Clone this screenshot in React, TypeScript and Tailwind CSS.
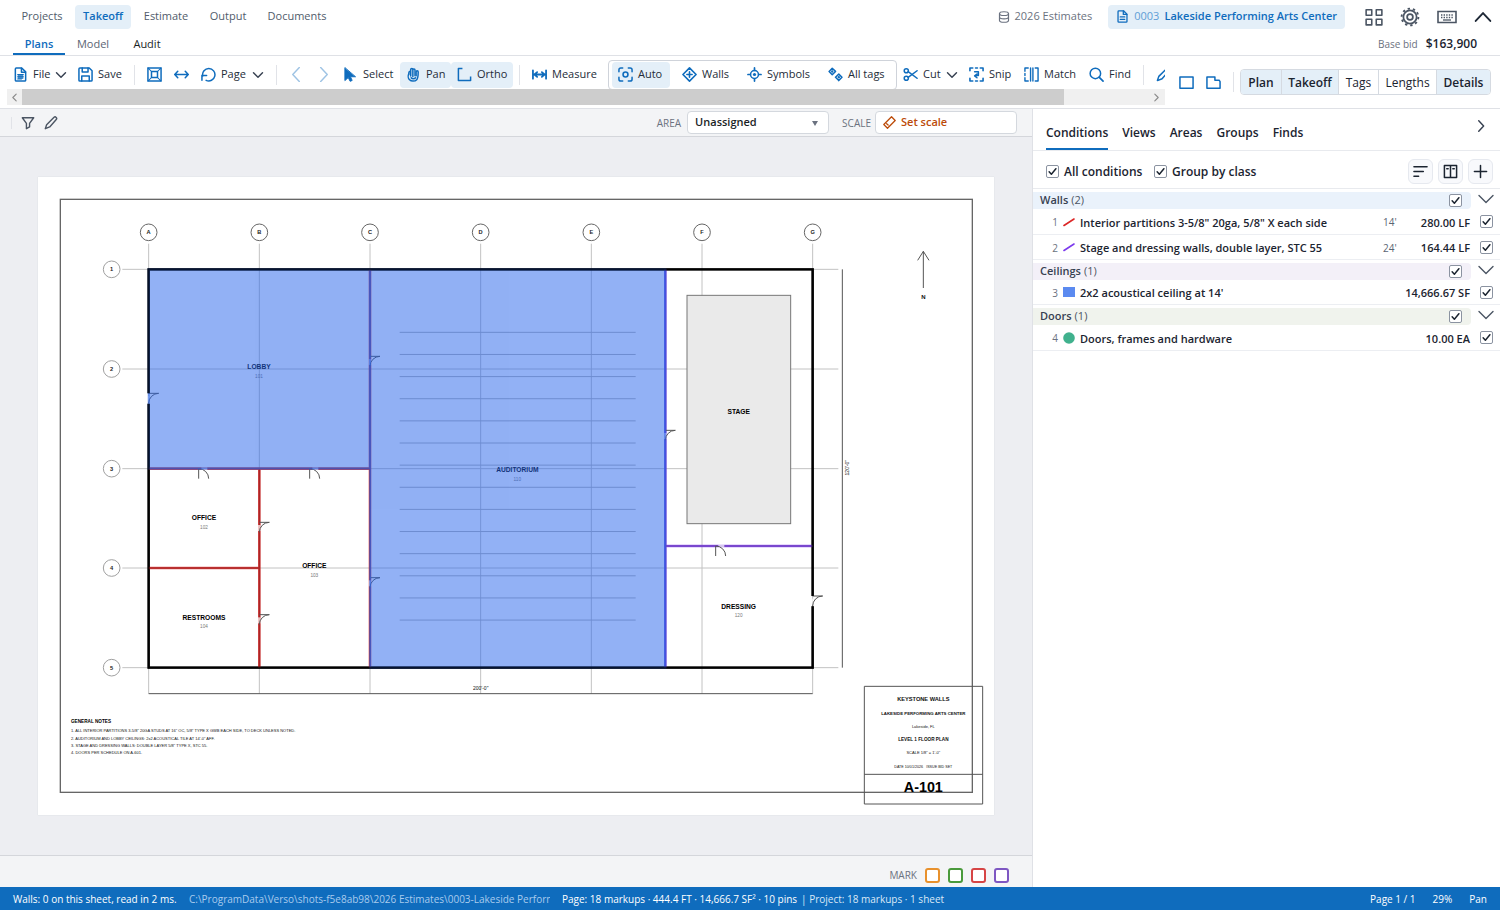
import type { ReactNode } from "react";
import clsx from "clsx";

/* ---------- icons ---------- */

function Icon({ children, size = "size-[15px]", className }: { children: ReactNode; size?: string; className?: string }) {
  return (
    <svg
      viewBox="0 0 16 16"
      fill="none"
      stroke="currentColor"
      strokeWidth="1.6"
      strokeLinecap="round"
      strokeLinejoin="round"
      aria-hidden="true"
      className={clsx("shrink-0", size, className)}
    >
      {children}
    </svg>
  );
}

const docPath = (
  <>
    <path d="M2.5 2a1 1 0 0 1 1-1h5.8l4.2 4.2V14a1 1 0 0 1-1 1h-9a1 1 0 0 1-1-1z" />
    <path d="M9 1.2v4.3h4.3" />
  </>
);

const icons = {
  file: (
    <>
      {docPath}
      <path d="M5 8h6v4.8H5z" fill="currentColor" stroke="none" opacity=".75" />
      <path d="M5 8h6M5 10.4h6M5 12.8h4" strokeWidth="1.1" />
    </>
  ),
  doc: (
    <>
      {docPath}
      <path d="M5.2 8.5h5.6M5.2 11.5h5.6" />
    </>
  ),
  save: (
    <>
      <path d="M1 2a1 1 0 0 1 1-1h10l3 3v10a1 1 0 0 1-1 1H2a1 1 0 0 1-1-1z" />
      <path d="M4.5 1v4.2h6.2V1M4 15V9.5h8V15" />
    </>
  ),
  fit: (
    <>
      <path d="M1 1h14v14H1zM4.8 4.8h6.4v6.4H4.8z" />
      <path d="m1 1 3.8 3.8M15 1l-3.8 3.8M1 15l3.8-3.8M15 15l-3.8-3.8" strokeWidth="1.1" />
    </>
  ),
  width: <path d="M1 8h14M4 4.5.8 8 4 11.5M12 4.5 15.2 8 12 11.5" />,
  rotate: (
    <>
      <path d="M1.8 9.5A6.6 6.6 0 1 1 5.5 14.2" />
      <path d="M1 14V9h5" />
    </>
  ),
  prev: <path d="M11 .5 4 8l7 7.5" strokeWidth="1.5" />,
  next: <path d="M5 .5 12 8l-7 7.5" strokeWidth="1.5" />,
  cursor: <path d="M2 1v13.5l3.6-3.2 2 4 2.2-1-1.9-3.9H13z" fill="currentColor" strokeWidth="1" />,
  hand: (
    <>
      <path d="M3 7.5c-1 1.5-.8 4.5.8 6.2 1.8 1.900 5.800 1.800 7.600-.2 1.400-1.600 1.600-4 1.600-8.300 0-1.600-2.200-1.600-2.200 0v4" />
      <path d="M5 9.5V2.7c0-1.600 2.300-1.600 2.300 0V10M7.300 3c.2-1.400 2.300-1.300 2.300.2v6M5 4.500C3.300 4.300 3 5.500 3 7.500M5.500 11.500c1 1.400 3.500 1.400 4.700 0" />
    </>
  ),
  ortho: <path d="M5 1.5H1.5v13h13V11" strokeLinecap="square" />,
  measure: <path d="M1 3.5v9M15 3.5v9M2.5 8h11M5.5 5.5 2.5 8l3 2.5M10.5 5.5l3 2.5-3 2.5" strokeWidth="1.9" />,
  auto: (
    <>
      <path d="M1 5V3a2 2 0 0 1 2-2h2M11 1h2a2 2 0 0 1 2 2v2M15 11v2a2 2 0 0 1-2 2h-2M5 15H3a2 2 0 0 1-2-2v-2" />
      <circle cx="8" cy="8" r="2.600" strokeWidth="1.700" />
    </>
  ),
  walls: <path d="M8 1 15 8l-7 7-7-7zM8 5.200v5.600M5.200 8h5.600" strokeWidth="1.700" />,
  symbols: (
    <>
      <circle cx="8" cy="8" r="4.200" />
      <circle cx="8" cy="8" r="1.700" fill="currentColor" stroke="none" />
      <path d="M8 1v2.500M8 12.500V15M1 8h2.500M12.500 8H15" strokeWidth="1.800" />
    </>
  ),
  tags: (
    <>
      <path d="M4.500 1.300 8 4.700 4.500 8.200 1.200 4.700zM11.500 7.600l3.400 3.400-3.400 3.500L8 11z" />
      <path d="M4.500 4.700h.01M11.500 11h.01" strokeWidth="2.600" />
    </>
  ),
  cut: (
    <>
      <circle cx="3.500" cy="4" r="2.200" />
      <circle cx="3.500" cy="12" r="2.200" />
      <path d="M5.500 5 15 12M5.500 11 15 4" />
    </>
  ),
  snip: (
    <>
      <path d="M1 4V1h3M7 1h2M12 1h3v3M15 12v3h-3M9 15H7M4 15H1v-3" strokeWidth="1.700" />
      <path d="M6 5h4v4H7.500M8.500 7.500 6 9.500l2.500 2" />
    </>
  ),
  match: <path d="M4.500 1H1v3.500M1 7v2M1 11.500V15h3.500M7 1v14M9.500 1v14M12 1h3v14h-3" strokeWidth="1.500" />,
  find: (
    <>
      <circle cx="6.800" cy="6.800" r="5.600" />
      <path d="m11 11 4 4" strokeWidth="1.800" />
    </>
  ),
  pen: <path d="M1.500 14.500 3 10l8.500-8.500c1.500-1.500 4 1 2.500 2.500L6.500 12.500z" />,
  rect: <path d="M1 2h14v12H1z" strokeWidth="1.600" />,
  shape: <path d="M1 2h8.500v3.500H14L15 7v7H1z" strokeWidth="1.600" />,
  chevron: <path d="m2 5 6 6 6-6" strokeWidth="1.900" />,
  filter: <path d="M1.500 2h13L9.800 8.500v4l-3.600 2v-6z" />,
  ruler: <path d="M10.500 1 15 5.500 5.500 15 1 10.500zM4.500 9.500l1.800 1.600" />,
};

function ChevronIcon({ className }: { className?: string }) {
  return (
    <Icon size="size-3" className={clsx("text-[#374151]", className)}>
      {icons.chevron}
    </Icon>
  );
}

/* ---------- header ---------- */

function Header() {
  const links = ["Projects", "Takeoff", "Estimate", "Output", "Documents"];
  const widths = ["w-[66px]", "w-14", "w-[70px]", "w-[54px]", "w-[84px]"];
  return (
    <header className="border-b border-[#dfe1e6]">
      <div className="flex h-[33px] items-center pr-2 pl-[9px]">
        <nav className="flex text-[11px] text-[#515c6b]">
          {links.map((link, i) => (
            <a
              key={link}
              href="#"
              className={clsx(
                "flex h-6 items-center justify-center rounded",
                widths[i],
                link === "Takeoff" && "bg-[#e4eff8] font-semibold text-[#0f6cbd]",
              )}
            >
              {link}
            </a>
          ))}
        </nav>
        <div className="ml-auto flex items-center">
          <a href="#" className="flex items-center gap-[5px] text-[11px] text-[#6b7280]">
            <Icon size="size-3">
              <ellipse cx="8" cy="3.5" rx="6" ry="2.5" />
              <path d="M2 3.5v9c0 3.3 12 3.3 12 0v-9M2 8c0 3.3 12 3.3 12 0" />
            </Icon>
            2026 Estimates
          </a>
          <a href="#" className="ml-4 flex h-6 items-center rounded bg-[#e4eff8] px-2 text-[11px] text-[#0f6cbd]">
            <Icon size="size-[13px]">{icons.doc}</Icon>
            <span className="ml-[5px] text-[#5f9ed6]">0003</span>
            <span className="ml-[5px] font-semibold">Lakeside Performing Arts Center</span>
          </a>
          <button type="button" aria-label="Apps" className="ml-5 text-[#4b5563]">
            <Icon size="size-[18px]">
              <path d="M1 1.500h5v5H1zM10 1.500h5v5h-5zM1 10h5v5H1zM10 10h5v5h-5z" strokeWidth="1.400" />
            </Icon>
          </button>
          <button type="button" aria-label="Settings" className="ml-[17px] text-[#4b5563]">
            <Icon size="size-5">
              <circle cx="8" cy="8" r="5.300" strokeWidth="1.400" />
              <circle cx="8" cy="8" r="2.300" strokeWidth="1.400" />
              <circle cx="8" cy="8" r="6.700" strokeWidth="1.500" strokeLinecap="butt" strokeDasharray="1.900 2.310" />
            </Icon>
          </button>
          <button type="button" aria-label="Keyboard" className="ml-[17px] text-[#4b5563]">
            <svg viewBox="0 0 20 14" fill="none" stroke="currentColor" className="h-[14px] w-5" aria-hidden="true">
              <path d="M1 1.500h18v11H1z" strokeWidth="1.600" />
              <path d="M4 5h12M4 7.500h12" strokeWidth="1.300" strokeDasharray="1.400 1.200" />
              <path d="M6 10h8" strokeWidth="1.300" />
            </svg>
          </button>
          <button type="button" aria-label="Collapse header" className="ml-[17px] text-[#1f2937]">
            <Icon size="size-[18px]">
              <path d="m1.500 11.500 6.500-7 6.500 7" strokeWidth="1.700" />
            </Icon>
          </button>
        </div>
      </div>
      <div className="flex h-[22px] items-stretch pr-[23px] pl-[13px]">
        <nav className="flex text-[11px]">
          <a href="#" className="flex w-[52px] items-center justify-center border-b-2 border-[#0f6cbd] pt-[3px] font-semibold text-[#0f6cbd]">
            Plans
          </a>
          <a href="#" className="flex w-14 items-center justify-center border-b-2 border-transparent pt-[3px] text-[#5b6573]">
            Model
          </a>
          <a href="#" className="flex w-[52px] items-center justify-center border-b-2 border-transparent pt-[3px] text-[#1b1f26]">
            Audit
          </a>
        </nav>
        <p className="ml-auto flex items-center gap-2 text-[10px] text-[#6b7280]">
          Base bid <strong className="text-xs font-semibold text-[#1b2430]">$163,900</strong>
        </p>
      </div>
    </header>
  );
}

/* ---------- toolbar ---------- */

function Tool({
  icon,
  label,
  width,
  text,
  active,
  menu,
  className,
}: {
  icon: ReactNode;
  label: string;
  width: string;
  text?: boolean;
  active?: boolean;
  menu?: boolean;
  className?: string;
}) {
  return (
    <button
      type="button"
      aria-label={label}
      aria-pressed={active}
      className={clsx(
        "flex h-[26px] shrink-0 items-center gap-[5px] rounded-sm px-[6px] text-[11px] whitespace-nowrap",
        width,
        active && "bg-[#e4eff8]",
        className,
      )}
    >
      <Icon className="text-[#0f6cbd]">{icon}</Icon>
      {text && <span>{label}</span>}
      {menu && <ChevronIcon className="ml-auto" />}
    </button>
  );
}

function Divider() {
  return <span className="mx-[6px] h-5 w-px shrink-0 bg-[#e1e3e8]" />;
}

function Toolbar() {
  const layers = [
    { label: "Plan", width: "w-10", on: true },
    { label: "Takeoff", width: "w-[57px]", on: true },
    { label: "Tags", width: "w-10", on: false },
    { label: "Lengths", width: "w-[58px]", on: false },
    { label: "Details", width: "w-[54px]", on: true },
  ];
  return (
    <div className="flex h-[53px] border-b border-[#dfe1e6] pr-[9px] pl-[7px]">
      <div className="flex min-w-0 flex-1 flex-col">
        <div className="flex h-[33px] items-center overflow-hidden pt-1 text-[#242c38]">
          <Tool icon={icons.file} label="File" width="w-[65px]" text menu />
          <Tool icon={icons.save} label="Save" width="w-14" text />
          <Divider />
          <Tool icon={icons.fit} label="Fit page" width="w-[27px]" />
          <Tool icon={icons.width} label="Fit width" width="w-[27px]" />
          <Tool icon={icons.rotate} label="Page" width="w-[75px]" text menu />
          <Divider />
          <Tool icon={icons.prev} label="Previous page" width="w-[27px]" className="opacity-40" />
          <Tool icon={icons.next} label="Next page" width="w-[27px]" className="opacity-40" />
          <Tool icon={icons.cursor} label="Select" width="w-[63px]" text />
          <Tool icon={icons.hand} label="Pan" width="w-[51px]" text active />
          <Tool icon={icons.ortho} label="Ortho" width="w-[62px]" text active />
          <Divider />
          <Tool icon={icons.measure} label="Measure" width="w-[76px]" text />
          <div className="ml-[6px] flex h-[30px] shrink-0 items-center gap-[6px] rounded-sm border border-[#cfd3da] px-[3px]">
            <Tool icon={icons.auto} label="Auto" width="w-[58px]" text active />
            <Tool icon={icons.walls} label="Walls" width="w-[59px]" text />
            <Tool icon={icons.symbols} label="Symbols" width="w-[75px]" text />
            <Tool icon={icons.tags} label="All tags" width="w-[71px]" text />
          </div>
          <Tool icon={icons.cut} label="Cut" width="w-[66px]" text menu />
          <Tool icon={icons.snip} label="Snip" width="w-[55px]" text />
          <Tool icon={icons.match} label="Match" width="w-[65px]" text />
          <Tool icon={icons.find} label="Find" width="w-[54px]" text />
          <Divider />
          <Tool icon={icons.pen} label="Pen" width="w-[27px]" />
        </div>
        <div className="flex h-4 items-center bg-[#f0f0f0] text-[#8a8a8a]">
          <Icon size="size-[9px]" className="mx-[3px]">
            <path d="M11 2 5 8l6 6" strokeWidth="2" />
          </Icon>
          <div className="h-full w-[90%] bg-[#cdcdcd]" />
          <Icon size="size-[9px]" className="mr-1 ml-auto">
            <path d="m5 2 6 6-6 6" strokeWidth="2" />
          </Icon>
        </div>
      </div>
      <div className="flex shrink-0 items-center pl-2">
        <Tool icon={icons.rect} label="Rectangle" width="w-[27px]" />
        <Tool icon={icons.shape} label="Polygon" width="w-[27px]" />
        <Divider />
        <div className="flex h-[26px] overflow-hidden rounded-sm border border-[#d5dae1] text-xs text-[#1b2430]">
          {layers.map((layer, i) => (
            <button
              key={layer.label}
              type="button"
              aria-pressed={layer.on}
              className={clsx(
                "flex items-center justify-center pt-[2px]",
                layer.width,
                layer.on && "bg-[#e4eff8] font-semibold",
                i > 0 && "border-l border-[#d5dae1]",
              )}
            >
              {layer.label}
            </button>
          ))}
        </div>
      </div>
    </div>
  );
}

/* ---------- plan sheet ---------- */

const COLS = [332, 664, 996, 1328, 1660, 1992, 2324];
const ROWS = [277, 576, 875, 1173, 1472];
const SEATS = Array.from({ length: 14 }, (_, i) => 466 + i * 66.4);

const ROOMS = [
  { name: "LOBBY", no: "101", x: 663, y: 570 },
  { name: "OFFICE", no: "102", x: 498, y: 1023 },
  { name: "OFFICE", no: "103", x: 829, y: 1167 },
  { name: "RESTROOMS", no: "104", x: 498, y: 1322 },
  { name: "AUDITORIUM", no: "110", x: 1438, y: 879 },
  { name: "STAGE", no: "", x: 2102, y: 704 },
  { name: "DRESSING", no: "120", x: 2102, y: 1288 },
];

const EXTERIOR = "M332 649V277H2324V1257M2324 1288V1472H332V680";
const PARTITIONS = "M332 875H996M996 277V1472M664 875V1472M332 1173H664";
const STAGE_WALLS = "M1882 277V1472M1882 1107H2324";

// doors in vertical walls swing right, doors in horizontal walls swing down
const V_DOORS = [
  [332, 649],
  [996, 538],
  [664, 1036],
  [664, 1313],
  [996, 1202],
  [1882, 760],
  [2324, 1257],
];
const H_DOORS = [
  [482, 875],
  [815, 875],
  [2033, 1107],
];

const NOTES = [
  "1. ALL INTERIOR PARTITIONS 3-5/8\" 20GA STUDS AT 16\" OC, 5/8\" TYPE X GWB EACH SIDE, TO DECK UNLESS NOTED.",
  "2. AUDITORIUM AND LOBBY CEILINGS: 2x2 ACOUSTICAL TILE AT 14'-0\" AFF.",
  "3. STAGE AND DRESSING WALLS: DOUBLE LAYER 5/8\" TYPE X, STC 55.",
  "4. DOORS PER SCHEDULE ON A-601.",
];

function Sheet() {
  return (
    <svg
      viewBox="0 0 2868 1914"
      role="img"
      aria-label="A-101 Level 1 floor plan"
      className="w-full bg-white font-['Liberation_Sans',Arial,sans-serif] shadow-[0_0_1px_#c9ccd3]"
    >
      <rect x="67" y="67" width="2736" height="1779" fill="none" stroke="#666" strokeWidth="4" />

      {/* grid */}
      <g stroke="#c2c2c2" strokeWidth="3">
        {COLS.map((x) => (
          <path key={x} d={`M${x} 200V1550`} />
        ))}
        {ROWS.map((y) => (
          <path key={y} d={`M253 ${y}H2401`} />
        ))}
      </g>
      <g fill="#fff" strokeWidth="3">
        {COLS.map((x) => (
          <circle key={x} cx={x} cy="166" r="25" stroke="#666" />
        ))}
        {ROWS.map((y) => (
          <circle key={y} cx="221" cy={y} r="25" stroke="#a0a0a0" />
        ))}
      </g>
      <g fill="#222" fontSize="17" fontWeight="700" textAnchor="middle">
        {COLS.map((x, i) => (
          <text key={x} x={x} y="172">
            {"ABCDEFG"[i]}
          </text>
        ))}
        {ROWS.map((y, i) => (
          <text key={y} x="221" y={y + 6}>
            {i + 1}
          </text>
        ))}
      </g>

      <rect x="1947" y="355" width="311" height="685" fill="#eaeaea" stroke="#777" strokeWidth="3" />
      <g stroke="#b4b4b4" strokeWidth="3">
        {SEATS.map((y) => (
          <path key={y} d={`M1085 ${y}H1793`} />
        ))}
      </g>

      {/* walls */}
      <path d={EXTERIOR} fill="none" stroke="#000" strokeWidth="7" />
      <path d={PARTITIONS} fill="none" stroke="#222" strokeWidth="5" />
      <path d={STAGE_WALLS} fill="none" stroke="#444" strokeWidth="5" />

      {/* wall markups */}
      <g fill="none" strokeWidth="8" opacity=".75">
        <path d={PARTITIONS} stroke="#dc2626" />
        <path d={STAGE_WALLS} stroke="#7c3aed" />
      </g>

      {/* doors */}
      <g stroke="#fff" strokeWidth="8" opacity=".7">
        {V_DOORS.map(([x, y]) => (
          <path key={`${x}-${y}`} d={`M${x} ${y + 8}v18`} />
        ))}
        {H_DOORS.map(([x, y]) => (
          <path key={`${x}-${y}`} d={`M${x + 8} ${y}h18`} />
        ))}
      </g>
      <g stroke="#555" strokeWidth="3" fill="none">
        {V_DOORS.map(([x, y]) => (
          <path key={`${x}-${y}`} d={`M${x} ${y}h30a30 30 0 0 0-30 30`} />
        ))}
        {H_DOORS.map(([x, y]) => (
          <path key={`${x}-${y}`} d={`M${x} ${y + 30}v-30a30 30 0 0 1 30 30`} />
        ))}
      </g>

      {/* rooms */}
      <g textAnchor="middle">
        {ROOMS.map((room) => (
          <g key={`${room.name}${room.no}`}>
            <text x={room.x} y={room.y + 7} fontSize="20" fontWeight="700" fill="#000">
              {room.name}
            </text>
            <text x={room.x} y={room.y + 32} fontSize="14" fill="#777">
              {room.no}
            </text>
          </g>
        ))}
      </g>

      {/* dimensions and north arrow */}
      <g stroke="#555" strokeWidth="3" fill="none">
        <path d="M332 1550H2324M2413 277V1472" />
        <path d="M2656 333V223M2639 250l17-27 17 27" />
      </g>
      <g fill="#111" fontSize="15" textAnchor="middle">
        <text x="1328" y="1539">200'-0"</text>
        <text transform="translate(2434 872) rotate(-90)">120'-0"</text>
        <text x="2656" y="366" fontSize="18" fontWeight="700">
          N
        </text>
      </g>

      {/* notes */}
      <text x="99" y="1639" fontSize="14" fontWeight="700" fill="#000">
        GENERAL NOTES
      </text>
      <g fontSize="12" fill="#111">
        {NOTES.map((note, i) => (
          <text key={note} x="99" y={1666 + i * 22}>
            {note}
          </text>
        ))}
      </g>

      {/* title block */}
      <g fill="none" stroke="#555" strokeWidth="3">
        <path d="M2479 1528h355v353h-355zM2479 1792h355" />
      </g>
      <g textAnchor="middle" fill="#111">
        <text x="2656" y="1573" fontSize="17" fontWeight="700">KEYSTONE WALLS</text>
        <text x="2656" y="1613" fontSize="13" fontWeight="700">LAKESIDE PERFORMING ARTS CENTER</text>
        <text x="2656" y="1652" fontSize="12">Lakeside, FL</text>
        <text x="2656" y="1692" fontSize="14" fontWeight="700">LEVEL 1 FLOOR PLAN</text>
        <text x="2656" y="1732" fontSize="12">SCALE 1/8" = 1'-0"</text>
        <text x="2656" y="1772" fontSize="11">DATE 10/01/2026 {"\u00a0"} ISSUE BID SET</text>
        <text x="2656" y="1845" fontSize="43" fontWeight="700" fill="#000">A-101</text>
      </g>

      {/* ceiling markups */}
      <g fill="#2563eb" opacity=".5">
        <path d="M332 277H996V875H332z" />
        <path d="M996 277H1882V1472H996z" />
      </g>
      <path d="M332 277H1882V1472H996V875H332zM996 277V875" fill="none" stroke="#2563eb" strokeWidth="6" opacity=".5" />
      <path d={EXTERIOR} fill="none" stroke="#000" strokeWidth="7" opacity=".7" />
    </svg>
  );
}

function PlanPane() {
  const marks = [
    { name: "Orange", color: "border-[#e8912d]" },
    { name: "Green", color: "border-[#4a9a3c]" },
    { name: "Red", color: "border-[#d64545]" },
    { name: "Purple", color: "border-[#7e57c2]" },
  ];
  return (
    <main className="flex min-w-0 flex-1 flex-col border-r border-[#dfe1e6] bg-[#edeef2]">
      <div className="flex h-7 items-center border-b border-[#d4d6db] bg-[#f3f4f6] pr-[15px] pl-[11px] text-[#4b5563]">
        <span className="h-3 w-px bg-[#e1e3e8]" />
        <button type="button" aria-label="Filter" className="ml-[9px]">
          <Icon size="size-[14px]">{icons.filter}</Icon>
        </button>
        <button type="button" aria-label="Edit" className="ml-[9px]">
          <Icon size="size-[14px]">{icons.pen}</Icon>
        </button>
        <label htmlFor="area" className="ml-auto pt-[2px] text-[10px] text-[#6b7280]">
          AREA
        </label>
        <div className="relative ml-[6px]">
          <select
            id="area"
            className="block h-[23px] w-[142px] appearance-none rounded-sm border border-[#d4d8de] bg-white pl-[7px] text-[11px] font-semibold text-[#1b1f26]"
          >
            <option>Unassigned</option>
          </select>
          <svg viewBox="0 0 6 5" className="pointer-events-none absolute top-[10px] right-[11px] h-[5px] w-[6px] fill-[#6b7280]" aria-hidden="true">
            <path d="M0 0h6L3 5z" />
          </svg>
        </div>
        <label htmlFor="scale" className="ml-[13px] pt-[2px] text-[10px] text-[#6b7280]">
          SCALE
        </label>
        <button
          id="scale"
          type="button"
          className="ml-1 flex h-[23px] w-[142px] items-center gap-[5px] rounded-sm border border-[#d4d8de] bg-white pl-[7px] text-[11px] font-semibold text-[#bc4b09]"
        >
          <Icon size="size-[13px]">{icons.ruler}</Icon>
          Set scale
        </button>
      </div>
      <div className="flex flex-1 items-center px-[38px]">
        <Sheet />
      </div>
      <div className="flex h-8 items-center gap-2 border-t border-[#d4d6db] bg-[#f3f4f6] pt-2 pr-[23px]">
        <span className="ml-auto text-[10px] text-[#6b7280]">MARK</span>
        {marks.map((mark) => (
          <button
            key={mark.name}
            type="button"
            aria-label={mark.name}
            className={clsx("size-[15px] rounded-[3px] border-2 bg-white", mark.color)}
          />
        ))}
      </div>
    </main>
  );
}

/* ---------- conditions panel ---------- */

function Check({ id, label }: { id: string; label?: string }) {
  return (
    <span className="inline-grid size-[13px] place-items-center align-middle">
      <input
        id={id}
        type="checkbox"
        defaultChecked
        aria-label={label}
        className="peer col-start-1 row-start-1 size-[13px] appearance-none rounded-xs border border-[#8b93a1] bg-white"
      />
      <Icon size="size-[9px]" className="pointer-events-none invisible col-start-1 row-start-1 text-[#1b2430] peer-checked:visible">
        <path d="m2 8.500 4 4.500 8-10" strokeWidth="2.600" />
      </Icon>
    </span>
  );
}

const GROUPS = [
  {
    name: "Walls",
    tint: "bg-[#eaf2fb]",
    items: [
      { no: 1, kind: "line", color: "#dc2626", name: "Interior partitions 3-5/8\" 20ga, 5/8\" X each side", height: "14'", qty: "280.00 LF" },
      { no: 2, kind: "line", color: "#7c3aed", name: "Stage and dressing walls, double layer, STC 55", height: "24'", qty: "164.44 LF" },
    ],
  },
  {
    name: "Ceilings",
    tint: "bg-[#f3f0f8]",
    items: [{ no: 3, kind: "area", color: "#5b8af0", name: "2x2 acoustical ceiling at 14'", height: "", qty: "14,666.67 SF" }],
  },
  {
    name: "Doors",
    tint: "bg-[#f0f3ed]",
    items: [{ no: 4, kind: "pin", color: "#40b18d", name: "Doors, frames and hardware", height: "", qty: "10.00 EA" }],
  },
];

function Swatch({ kind, color }: { kind: string; color: string }) {
  return (
    <svg viewBox="0 0 12 12" className="size-3" aria-hidden="true">
      {kind === "line" && <path d="M1 9.500 11 3" stroke={color} strokeWidth="1.600" strokeLinecap="round" />}
      {kind === "area" && <path d="M0 1h12v10H0z" fill={color} />}
      {kind === "pin" && <circle cx="6" cy="6" r="5.800" fill={color} />}
    </svg>
  );
}

function ConditionsPanel() {
  const boxed = "grid size-[25px] place-items-center rounded-md border border-[#e6e9ef] bg-[#f8f9fc] text-[#1b2430]";
  return (
    <aside className="w-[467px] shrink-0 bg-white">
      <div className="flex h-[42px] items-end border-b border-[#e8eaee] pr-[13px] pl-[13px]">
        <nav className="flex gap-[14px] text-xs font-semibold text-[#1b2430]">
          {["Conditions", "Views", "Areas", "Groups", "Finds"].map((tab, i) => (
            <a
              key={tab}
              href="#"
              className={clsx("flex h-[25px] items-start border-b-2", i === 0 ? "border-[#0f6cbd]" : "border-transparent")}
            >
              {tab}
            </a>
          ))}
        </nav>
        <button type="button" aria-label="Collapse panel" className="mb-[18px] ml-auto text-[#374151]">
          <Icon size="size-3">
            <path d="m5 1 6.500 7L5 15" strokeWidth="1.900" />
          </Icon>
        </button>
      </div>

      <div className="flex h-[38px] items-center border-b border-[#e8eaee] pt-1 pr-[7px] pl-[13px] text-xs font-semibold text-[#1b2430]">
        <Check id="all" />
        <label htmlFor="all" className="ml-[5px] w-[90px] pt-px whitespace-nowrap">
          All conditions
        </label>
        <Check id="by-class" />
        <label htmlFor="by-class" className="ml-[5px] pt-px whitespace-nowrap">
          Group by class
        </label>
        <div className="ml-auto flex gap-[5px]">
          <button type="button" aria-label="Sort" className={boxed}>
            <Icon>
              <path d="M1 3h14M1 8h10M1 13h5" />
            </Icon>
          </button>
          <button type="button" aria-label="Columns" className={boxed}>
            <Icon>
              <path d="M1.500 1.500h13v13h-13zM8 1.500v13M4 5h1.500M10.500 5H12" />
            </Icon>
          </button>
          <button type="button" aria-label="Add condition" className={boxed}>
            <Icon>
              <path d="M8 1.500v13M1.500 8h13" />
            </Icon>
          </button>
        </div>
      </div>

      <table className="w-full table-fixed border-collapse text-left text-[11px]">
        <colgroup>
          <col className="w-[25px]" />
          <col className="w-[22px]" />
          <col />
          <col className="w-[22px]" />
          <col className="w-[66px]" />
          <col className="w-[29px]" />
        </colgroup>
        {GROUPS.map((group) => (
          <tbody key={group.name}>
            <tr className="h-5">
              <th colSpan={5} scope="rowgroup" className="p-0 pt-[3px] font-normal">
                <div className={clsx("flex h-[17px] items-center rounded-r-sm pr-[9px] pl-[7px] text-[#4b5563]", group.tint)}>
                  <span className="mr-[3px] font-semibold text-[#374151]">{group.name}</span>({group.items.length})
                  <span className="ml-auto flex">
                    <Check id={group.name} label={`Show ${group.name}`} />
                  </span>
                </div>
              </th>
              <td className="p-0 text-center">
                <button type="button" aria-label={`Collapse ${group.name}`} className="block pl-[7px] text-[#4b5563]">
                  <Icon size="size-4">
                    <path d="m1 4.500 7 7 7-7" strokeWidth="1.400" />
                  </Icon>
                </button>
              </td>
            </tr>
            {group.items.map((item) => (
              <tr key={item.no} className="h-[25px] border-b border-[#eceef2] whitespace-nowrap text-[#1b2430]">
                <td className="p-0 pt-[3px] text-right text-[10px] text-[#6b7280]">{item.no}</td>
                <td className="p-0 pt-px pl-[5px]">
                  <Swatch kind={item.kind} color={item.color} />
                </td>
                <td className="p-0 pt-[3px] font-semibold">{item.name}</td>
                <td className="p-0 pt-[3px] text-[10px] text-[#5b6573]">{item.height}</td>
                <td className="p-0 pt-[3px] pr-px text-right font-semibold">{item.qty}</td>
                <td className="p-0 pt-px pl-[9px]">
                  <span className="flex">
                    <Check id={`item-${item.no}`} label={`Show ${item.name}`} />
                  </span>
                </td>
              </tr>
            ))}
          </tbody>
        ))}
      </table>
    </aside>
  );
}

function StatusBar() {
  return (
    <footer className="flex h-[23px] items-center bg-[#0f6cbd] px-[13px] pt-[2px] text-[10px] whitespace-nowrap text-white">
      <span className="w-44 shrink-0">Walls: 0 on this sheet, read in 2 ms.</span>
      <span className="w-[361px] shrink-0 overflow-hidden text-[#a9cbed]">
        C:\ProgramData\Verso\shots-f5e8ab98\2026 Estimates\0003-Lakeside Perform
      </span>
      <span className="ml-3">Page: 18 markups · 444.4 FT · 14,666.7 SF² · 10 pins</span>
      <span className="ml-1 text-[#dbe9f7]">| Project: 18 markups · 1 sheet</span>
      <span className="ml-auto">Page 1 / 1</span>
      <span className="ml-[17px]">29%</span>
      <span className="ml-[17px]">Pan</span>
    </footer>
  );
}

export default function App() {
  return (
    <div className="flex min-h-screen flex-col bg-white font-['Open_Sans','Noto_Sans',sans-serif]">
      <Header />
      <Toolbar />
      <div className="flex flex-1">
        <PlanPane />
        <ConditionsPanel />
      </div>
      <StatusBar />
    </div>
  );
}
